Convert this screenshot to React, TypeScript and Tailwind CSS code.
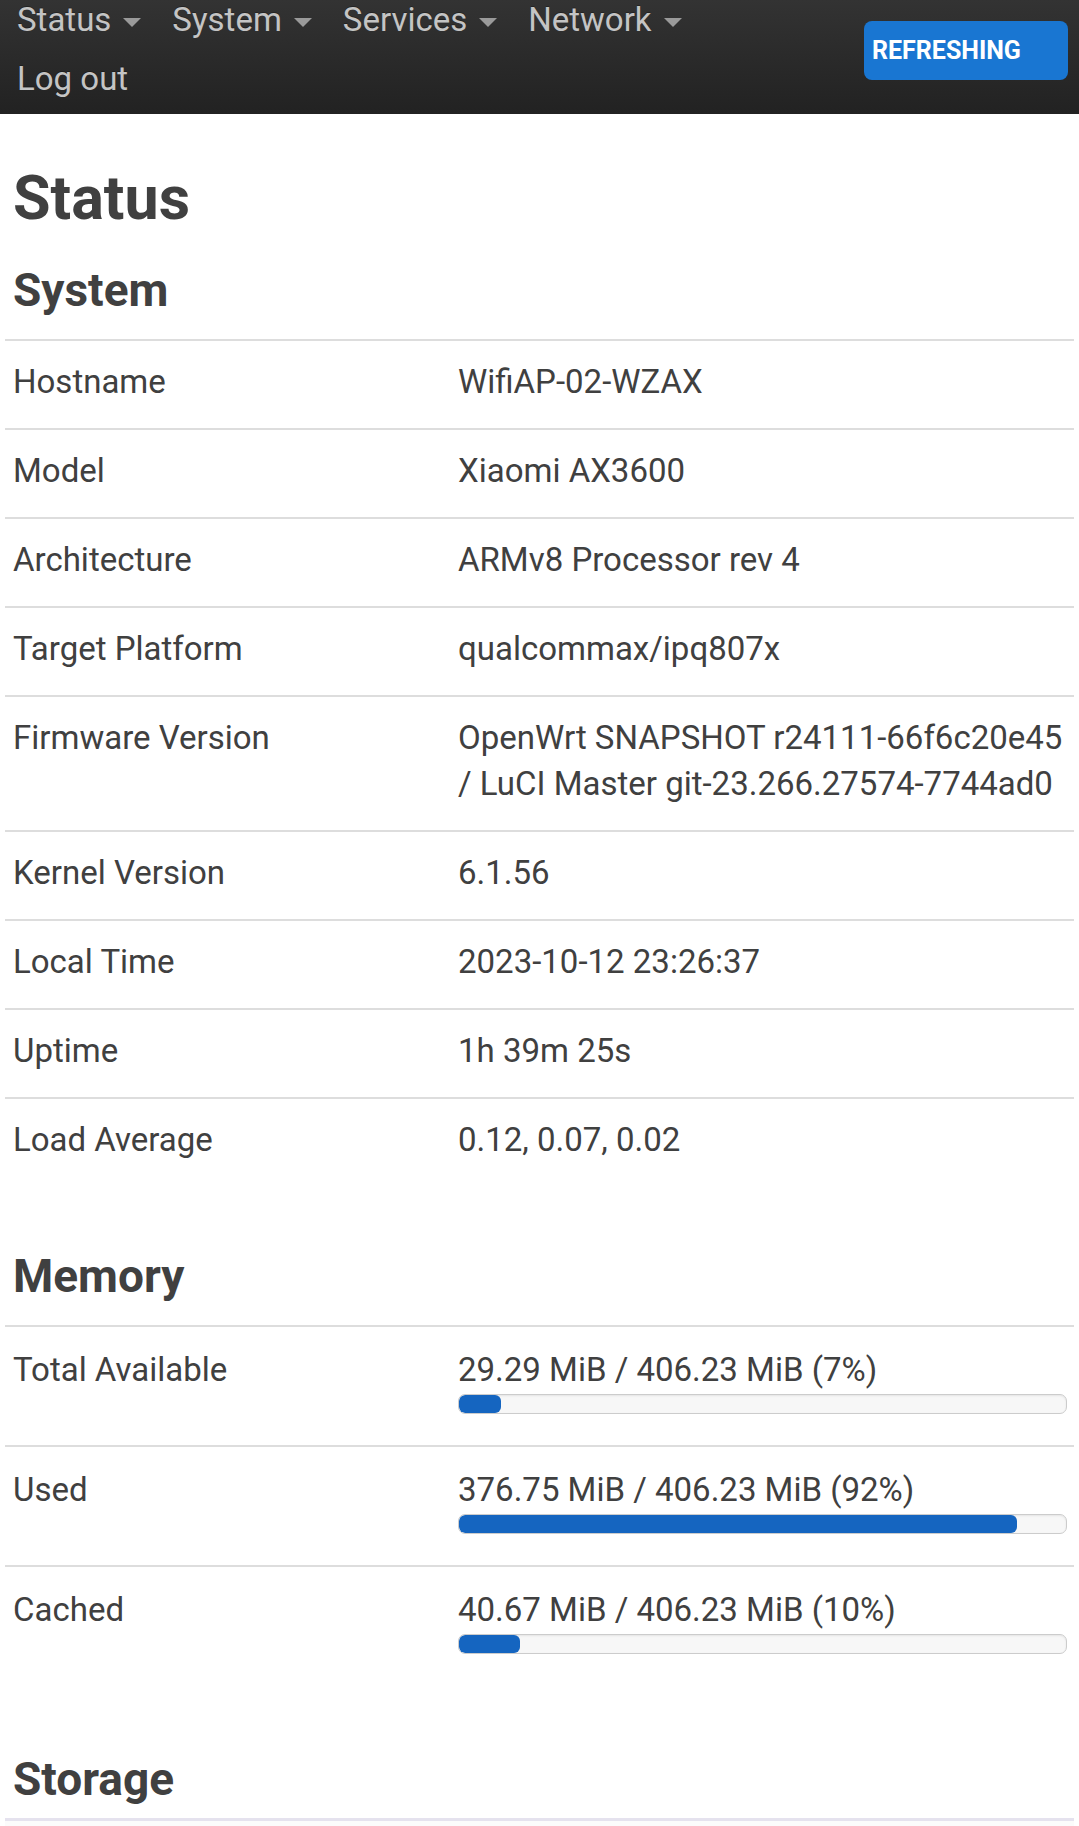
import React from "react";

// Rows for the "System" table
const systemRows: { label: string; value: React.ReactNode }[] = [
  { label: "Hostname", value: "WifiAP-02-WZAX" },
  { label: "Model", value: "Xiaomi AX3600" },
  { label: "Architecture", value: "ARMv8 Processor rev 4" },
  { label: "Target Platform", value: "qualcommax/ipq807x" },
  {
    label: "Firmware Version",
    value: (
      <>
        OpenWrt SNAPSHOT r24111-66f6c20e45
        <br />/ LuCI Master git-23.266.27574-7744ad0
      </>
    ),
  },
  { label: "Kernel Version", value: "6.1.56" },
  { label: "Local Time", value: "2023-10-12 23:26:37" },
  { label: "Uptime", value: "1h 39m 25s" },
  { label: "Load Average", value: "0.12, 0.07, 0.02" },
];

const memoryRows = [
  { label: "Total Available", value: "29.29 MiB / 406.23 MiB (7%)", pct: 7 },
  { label: "Used", value: "376.75 MiB / 406.23 MiB (92%)", pct: 92 },
  { label: "Cached", value: "40.67 MiB / 406.23 MiB (10%)", pct: 10 },
];

const menu = ["Status", "System", "Services", "Network"];

function Caret() {
  return (
    <span className="ml-[12px] mt-[6px] inline-block h-0 w-0 border-x-[9px] border-t-[9px] border-x-transparent border-t-[#9a9a9a]" />
  );
}

function Navbar() {
  return (
    <header className="flex h-[114px] items-start justify-between overflow-hidden bg-linear-to-b from-[#333333] to-[#222222]">
      <ul className="-mt-[10px] ml-[17px] flex w-[760px] flex-wrap text-[33px] leading-[59px] text-[#c4c4c4] [text-shadow:0_-1px_0_rgba(0,0,0,0.3)]">
        {menu.map((item) => (
          <li key={item} className="mr-[31px] flex items-center">
            {item}
            <Caret />
          </li>
        ))}
        <li>Log out</li>
      </ul>
      <span className="mr-[11px] mt-[21px] h-[59px] w-[204px] shrink-0 rounded-[8px] bg-[#1976d2] pl-[8px] text-[25px] font-bold leading-[59px] text-white">
        REFRESHING
      </span>
    </header>
  );
}

function Heading({ children, className = "" }: { children: React.ReactNode; className?: string }) {
  return (
    <h2 className={`pl-[8px] text-[46px] font-bold leading-[45px] text-[#404040] ${className}`}>
      {children}
    </h2>
  );
}

export default function App() {
  return (
    <div className="min-h-screen bg-white text-[#404040]" style={{ fontFamily: "Roboto, 'Noto Sans', sans-serif" }}>
      <Navbar />

      <main className="px-[5px] pt-[54px]">
        <h1 className="pl-[8px] text-[61px] font-bold leading-[60px] text-[#404040]">Status</h1>

        {/* System */}
        <Heading className="mt-[40px] mb-[26px]">System</Heading>
        <div className="text-[33px] leading-[46px]">
          {systemRows.map((row) => (
            <div key={row.label} className="flex border-t-2 border-[#dddddd] pt-[18px] pb-[23px]">
              <div className="w-[445px] shrink-0 pl-[8px]">{row.label}</div>
              <div className="flex-1 whitespace-nowrap pl-[8px]">{row.value}</div>
            </div>
          ))}
        </div>

        {/* Memory */}
        <Heading className="mt-[68px] mb-[26px]">Memory</Heading>
        <div className="text-[33px] leading-[46px]">
          {memoryRows.map((row) => (
            <div key={row.label} className="flex border-t-2 border-[#dddddd] pt-[20px] pb-[31px]">
              <div className="w-[445px] shrink-0 pl-[8px]">{row.label}</div>
              <div className="flex-1 pl-[8px] pr-[7px]">
                <div>{row.value}</div>
                <div className="mt-[1px] h-[20px] overflow-hidden rounded-[7px] border border-[#cccccc] bg-[#f7f7f7] shadow-[inset_0_1px_2px_rgba(0,0,0,0.08)]">
                  <div className="h-full rounded-[6px] bg-[#1565c0]" style={{ width: `${row.pct}%` }} />
                </div>
              </div>
            </div>
          ))}
        </div>

        {/* Storage */}
        <Heading className="mt-[72px] mb-[16px]">Storage</Heading>
        <div className="h-[60px] border-t-[3px] border-[#e5e2ee] bg-[#fbfbfb]" />
      </main>
    </div>
  );
}
